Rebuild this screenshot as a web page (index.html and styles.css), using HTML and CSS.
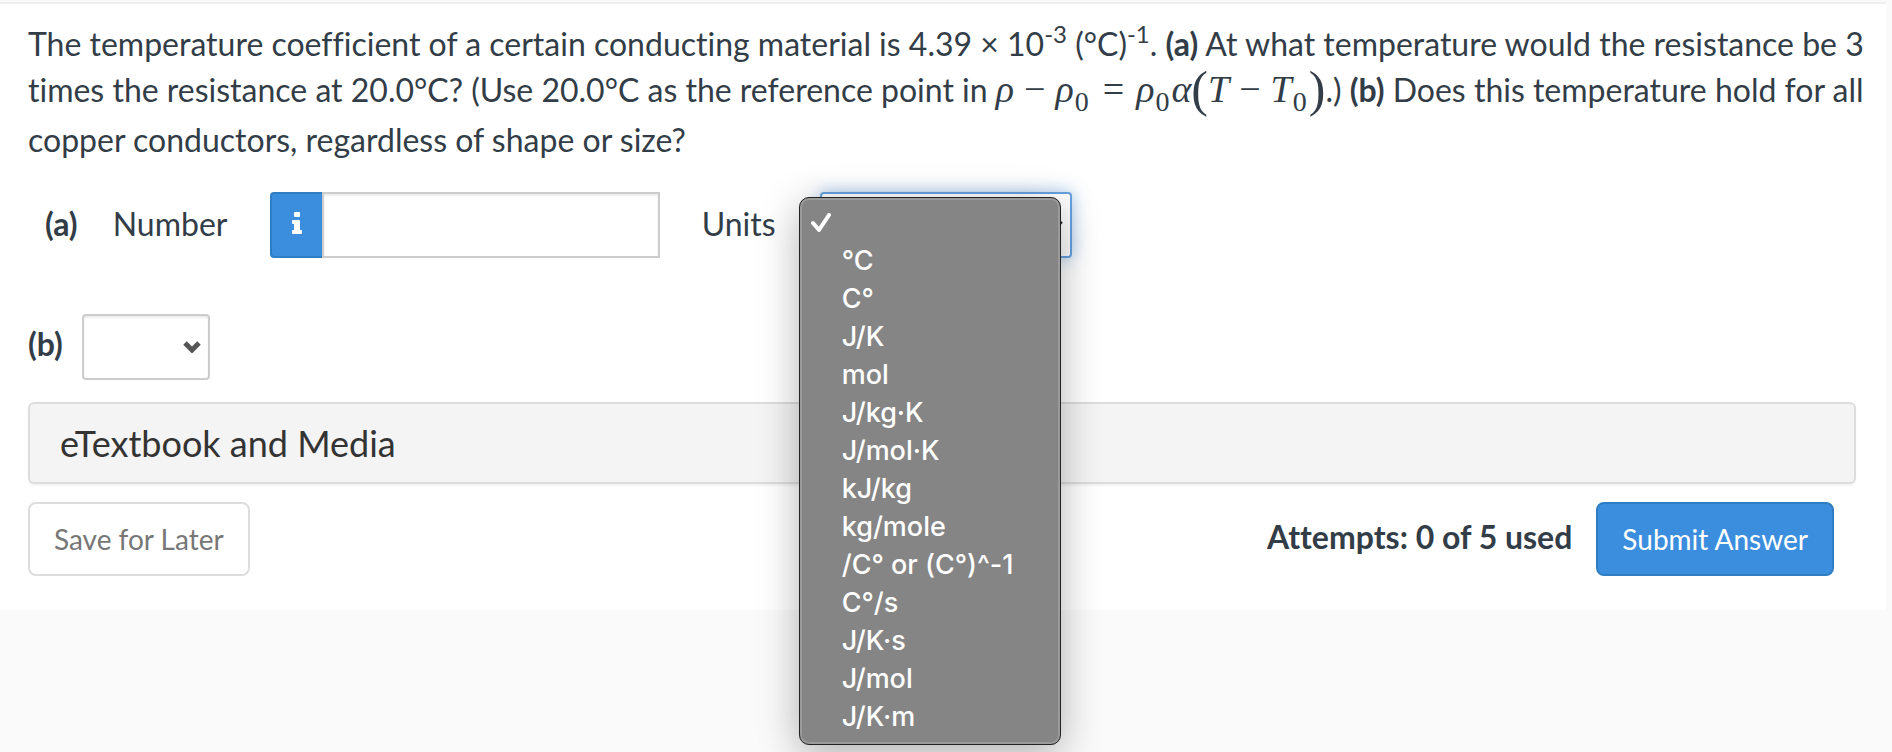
FILE: index.html
```
<!DOCTYPE html>
<html lang="en">
<head>
    <meta charset="UTF-8">
    <meta name="viewport" content="width=device-width, initial-scale=1.0">
    <title>Question</title>
    <link rel="stylesheet" href="styles.css">
</head>
<body>
    <main class="question">
        <p class="question-text">The temperature coefficient of a certain conducting material is 4.39 × 10<sup>-3</sup> (°C)<sup>-1</sup>. <b>(a)</b> At what temperature would the resistance be 3 times the resistance at 20.0°C? (Use 20.0°C as the reference point in <span class="formula"><i>ρ</i><span class="op">−</span><i>ρ</i><sub>0</sub><span class="op equals">=</span><i>ρ</i><sub>0</sub><i>α</i><span class="paren">(</span><i>T</i><span class="op">−</span><i>T</i><sub>0</sub><span class="paren">)</span></span>.) <b>(b)</b> Does this temperature hold for all copper conductors, regardless of shape or size?</p>

        <div class="answer-row answer-a">
            <b class="part">(a)</b>
            <label class="number-label" for="number">Number</label>
            <div class="input-group">
                <button class="info-btn" type="button" aria-label="Information">
                    <svg width="10" height="22" viewBox="0 0 10 22"><path d="M3 0h4a1 1 0 0 1 1 1v3a1 1 0 0 1-1 1H3a1 1 0 0 1-1-1V1a1 1 0 0 1 1-1zM1 8h6a1 1 0 0 1 1 1v9h1a1 1 0 0 1 1 1v2a1 1 0 0 1-1 1H1a1 1 0 0 1-1-1v-2a1 1 0 0 1 1-1h1v-6H1a1 1 0 0 1-1-1V9a1 1 0 0 1 1-1z"/></svg>
                </button>
                <input class="number-input" id="number" type="text">
            </div>
            <label class="units-label" for="units">Units</label>
            <div class="select-box units-box">
                <select class="select units-select" id="units">
                    <option></option>
                </select>
                <svg class="chevron" width="18" height="12" viewBox="0 0 18 12"><path d="M2 2l7 7 7-7"/></svg>
                <!-- open unit list -->
                <ul class="menu">
                    <li class="selected"><svg width="20" height="20" viewBox="0 0 20 20"><path d="M2 10l6 7L18 2"/></svg></li>
                    <li>°C</li>
                    <li>C°</li>
                    <li>J/K</li>
                    <li>mol</li>
                    <li>J/kg·K</li>
                    <li>J/mol·K</li>
                    <li>kJ/kg</li>
                    <li>kg/mole</li>
                    <li>/C° or (C°)^-1</li>
                    <li>C°/s</li>
                    <li>J/K·s</li>
                    <li>J/mol</li>
                    <li>J/K·m</li>
                </ul>
            </div>
        </div>

        <div class="answer-row answer-b">
            <label class="part" for="part-b">(b)</label>
            <div class="select-box part-b-box">
                <select class="select" id="part-b">
                    <option></option>
                </select>
                <svg class="chevron" width="18" height="12" viewBox="0 0 18 12"><path d="M2 2l7 7 7-7"/></svg>
            </div>
        </div>

        <button class="media-panel" type="button">eTextbook and Media</button>

        <div class="footer">
            <button class="btn btn-save" type="button">Save for Later</button>
            <b class="attempts">Attempts: 0 of 5 used</b>
            <button class="btn btn-submit" type="submit">Submit Answer</button>
        </div>
    </main>
</body>
</html>
```
FILE: styles.css
```
* {
    box-sizing: border-box;
}

body {
    margin: 0;
    min-height: 100vh;
    background: #fafafa;
    color: #323d47;
    font-family: Lato, sans-serif;
    font-size: 32px;
    font-variant-ligatures: none;
    line-height: 46px;
    overflow-x: hidden;
}

.question {
    margin: 2px 6px 0 0;
    padding: 17px 30px 34px 28px;
    border-top: 2px solid #eee;
    background: #fff;
}

.question-text {
    margin: 0 -28px 0 0;
}

sup {
    font-size: 24px;
    line-height: 24px;
    vertical-align: 13px;
}

/* formula */
.formula {
    display: inline-block;
    padding-bottom: 1px;
    font-family: "Liberation Serif", serif;
    font-size: 38px;
    line-height: 44px;
    white-space: nowrap;
}

.formula sub {
    margin: 0 2px 0 1px;
    font-size: 28px;
    line-height: 28px;
    vertical-align: -9px;
}

.formula .op {
    margin: 0 10px;
}

.formula .equals {
    margin: 0 12px;
}

.formula .paren {
    font-size: 50px;
    line-height: 40px;
    vertical-align: -4px;
}

/* answers */
.answer-row {
    display: flex;
    align-items: center;
}

.answer-a {
    margin-top: 29px;
    padding-left: 17px;
}

.answer-b {
    margin-top: 56px;
}

.part {
    padding-bottom: 6px;
    font-weight: 700;
}

.answer-a .part,
.number-label,
.units-label {
    padding-bottom: 2px;
}

.number-label {
    flex: none;
    width: 192px;
    padding-left: 35px;
}

.input-group {
    display: flex;
    width: 390px;
    height: 66px;
}

.info-btn {
    display: flex;
    align-items: center;
    justify-content: center;
    width: 52px;
    padding: 0 0 4px;
    border: 2px solid #2f7ec4;
    border-right: 0;
    border-radius: 4px 0 0 4px;
    background: #3b8ede;
}

.info-btn svg {
    fill: #fff;
}

.number-input {
    flex: 1;
    min-width: 0;
    padding: 8px 16px;
    border: 2px solid #ccc;
    box-shadow: inset 0 2px 2px rgba(0, 0, 0, 0.08);
    font: inherit;
}

.units-label {
    flex: none;
    width: 160px;
    padding-left: 42px;
}

.select-box {
    position: relative;
    height: 66px;
}

.select {
    appearance: none;
    width: 100%;
    height: 100%;
    border: 2px solid #ccc;
    border-radius: 4px;
    background: #fff;
    box-shadow: inset 0 2px 2px rgba(0, 0, 0, 0.08);
    font: inherit;
}

.units-box {
    width: 252px;
}

.units-select {
    border-color: #66a3e0;
    box-shadow: 0 0 16px rgba(80, 150, 225, 0.5);
}

.part-b-box {
    width: 128px;
    margin-left: 19px;
}

.chevron {
    position: absolute;
    top: 27px;
    right: 9px;
    fill: none;
    stroke: #555;
    stroke-width: 5;
    pointer-events: none;
}

.units-box .chevron {
    stroke: #222;
}

.menu {
    position: absolute;
    top: 5px;
    left: -21px;
    z-index: 2;
    width: 262px;
    margin: 0;
    padding: 6px 0 8px;
    border: 1px solid #222;
    border-radius: 10px;
    background: #858585;
    box-shadow: inset 0 0 0 2px #9a9a9a, 0 10px 40px rgba(0, 0, 0, 0.3);
    color: #fff;
    font-family: Inter, sans-serif;
    font-size: 27px;
    font-weight: 500;
    line-height: 38px;
    list-style: none;
}

.menu li {
    height: 38px;
    padding-left: 42px;
}

.menu .selected {
    display: flex;
    align-items: center;
    padding-left: 11px;
}

.menu svg {
    fill: none;
    stroke: #fff;
    stroke-width: 4;
    stroke-linecap: round;
    stroke-linejoin: round;
}

/* media and footer */
.media-panel {
    display: block;
    width: 100%;
    height: 82px;
    margin-top: 22px;
    padding: 0 30px;
    border: 2px solid #ddd;
    border-radius: 6px;
    background: #f4f4f4;
    box-shadow: 0 2px 2px rgba(0, 0, 0, 0.05);
    color: #333;
    font-family: inherit;
    font-size: 36px;
    text-align: left;
}

.footer {
    display: flex;
    align-items: center;
    margin-top: 18px;
    padding-right: 22px;
}

.btn {
    height: 74px;
    padding: 0 24px;
    border: 2px solid #ddd;
    border-radius: 8px;
    background: #fff;
    font-family: inherit;
    font-size: 28px;
}

.btn-save {
    color: #777;
}

.attempts {
    margin: 0 24px 0 auto;
    padding-bottom: 4px;
}

.btn-submit {
    border-color: #2f7ec4;
    background: #3b8ede;
    color: #fff;
}
```
